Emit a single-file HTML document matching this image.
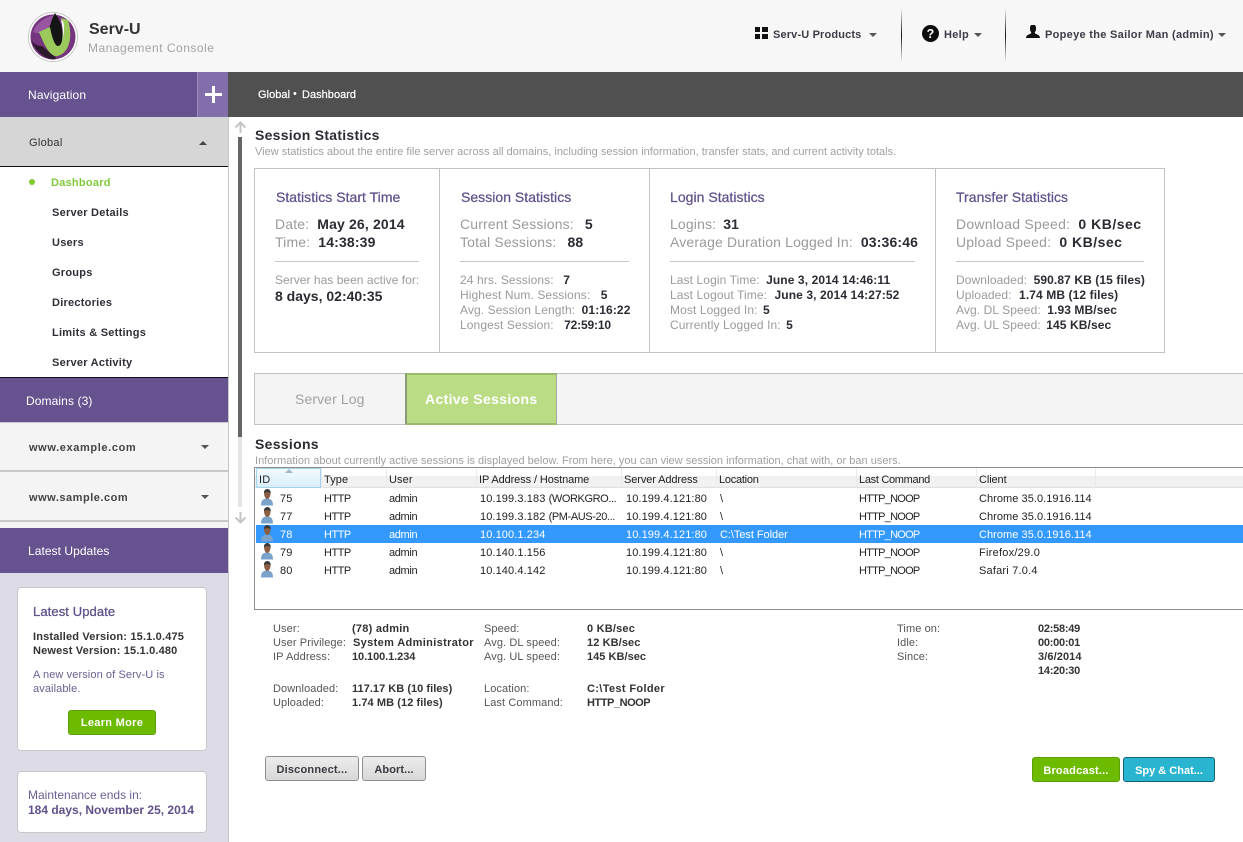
<!DOCTYPE html>
<html><head><meta charset="utf-8"><title>Serv-U Management Console</title>
<style>
html,body{margin:0;padding:0;background:#fff}
#p{position:relative;width:1243px;height:842px;overflow:hidden;font-family:"Liberation Sans",Arial,sans-serif;background:#fff;color:#2b2b33}
#p div,#p span.a,#p svg{position:absolute}
.t{position:absolute;white-space:nowrap;line-height:16px}
.box{box-sizing:border-box}
b{font-weight:bold}
.h{color:#61508a;font-size:14px;letter-spacing:.03px;-webkit-text-stroke:.25px #61508a}
.big{font-size:14px;color:#9a9a9a;letter-spacing:.15px}
.big b{color:#2b2b33;margin-left:4px}
.sm{font-size:12px;color:#9a9a9a;letter-spacing:.1px}
.sm b{color:#2b2b33;margin-left:3px}
.nav{font-size:11px;font-weight:bold;color:#2f2f38;letter-spacing:.25px}
.tb{font-size:11px;letter-spacing:.1px;color:#222}
.th{font-size:11px;letter-spacing:-.1px;color:#222}
.hn{letter-spacing:-.75px}
.ht{letter-spacing:-.5px}
.ad{letter-spacing:-.35px}
.cl{letter-spacing:.05px}
.hs{letter-spacing:-.4px}
.dt{font-size:11px;color:#555;letter-spacing:.1px}
.dv{font-size:11px;font-weight:bold;color:#333;letter-spacing:.35px}
.n{letter-spacing:.03px}
.btn{box-sizing:border-box;border-radius:3px;text-align:center;font-size:11px;font-weight:bold;letter-spacing:.2px}
</style></head><body><div id="p">

<!-- header -->
<div style="left:0;top:0;width:1243px;height:72px;background:#f7f7f7"></div>
<svg style="left:28px;top:12px" width="51" height="51" viewBox="0 0 51 51">
<circle cx="25" cy="25" r="24.5" fill="#fff" stroke="#c8c8c8"/>
<circle cx="25" cy="25" r="22.5" fill="#76357f"/>
<path d="M3 28C8 40 16 46 25 47.500 34 47.500 20 40 14 34 9 34 6 32 3 28Z" fill="#2a1a2c"/>
<path d="M8 14C14 7 22 3 30 3L20 16 12 22 5 20Z" fill="#97569f"/>
<path d="M27 1C21 12 19 24 21 36L32 38C37 28 36 14 27 1Z" fill="#151515"/>
<path d="M11 20L22 15C24 26 27 34 30 34 35 34 36 20 33 6L40 8C45 24 42 40 30 44 22 46 16 32 11 20Z" fill="#9cc95b"/>
<path d="M33 8C36 20 35 28 33 33 36 24 37 16 35 9Z" fill="#fff"/>
</svg>
<span class="t" style="left:89px;top:21px;font-size:16px;font-weight:bold;color:#333;line-height:18px">Serv-U</span>
<span class="t" style="left:88px;top:40px;font-size:12px;color:#a3a3a3;letter-spacing:.5px">Management Console</span>

<svg style="left:755px;top:27px" width="13" height="12"><rect width="5" height="5" fill="#111"/><rect x="7" width="6" height="5" fill="#111"/><rect y="7" width="5" height="5" fill="#111"/><rect x="7" y="7" width="6" height="5" fill="#111"/></svg>
<span class="t" style="left:773px;top:27px;font-size:11px;font-weight:bold;color:#3c3c48;letter-spacing:.15px">Serv-U Products</span>
<svg style="left:869px;top:33px" width="9" height="5"><path d="M0 0H8L4 4Z" fill="#555"/></svg>
<div style="left:901px;top:8px;width:1px;height:54px;background:linear-gradient(#f7f7f7,#111 50%,#f7f7f7)"></div>
<svg style="left:922px;top:25px" width="17" height="17"><circle cx="8.5" cy="8.5" r="8.5" fill="#0c0c0c"/><text x="8.5" y="13" font-size="12.5" font-weight="bold" fill="#fff" text-anchor="middle" font-family="Liberation Sans">?</text></svg>
<span class="t" style="left:944px;top:27px;font-size:11px;font-weight:bold;color:#3c3c48;letter-spacing:.3px">Help</span>
<svg style="left:974px;top:33px" width="9" height="5"><path d="M0 0H8L4 4Z" fill="#555"/></svg>
<div style="left:1005px;top:8px;width:1px;height:54px;background:linear-gradient(#f7f7f7,#111 50%,#f7f7f7)"></div>
<svg style="left:1026px;top:25px" width="14" height="13"><path d="M5 0H9L10 2V5L8.6 8C10 9.500 14 9.500 14 13H0C0 9.500 4 9.500 5.400 8L4 5V2Z" fill="#111"/></svg>
<span class="t" style="left:1045px;top:27px;font-size:11px;font-weight:bold;color:#3c3c48;letter-spacing:.3px">Popeye the Sailor Man (admin)</span>
<svg style="left:1218px;top:33px" width="9" height="5"><path d="M0 0H8L4 4Z" fill="#555"/></svg>

<!-- top bars -->
<div style="left:0;top:72px;width:197px;height:45px;background:#66528f"></div>
<div style="left:197px;top:72px;width:31px;height:45px;background:#826eaa;border-left:1px solid #9c8dbb;box-sizing:border-box"></div>
<div style="left:205px;top:93px;width:17px;height:3px;background:#fff"></div>
<div style="left:212px;top:86px;width:3px;height:17px;background:#fff"></div>
<span class="t" style="left:28px;top:87px;font-size:12px;color:#fff;letter-spacing:.15px">Navigation</span>
<div style="left:228px;top:72px;width:1015px;height:45px;background:#505050"></div>
<span class="t" style="left:258px;top:87px;font-size:11px;color:#fff;letter-spacing:.05px;-webkit-text-stroke:.2px #fff">Global</span>
<span class="t" style="left:293px;top:86px;font-size:11px;color:#fff">•</span>
<span class="t" style="left:302px;top:87px;font-size:11px;color:#fff;letter-spacing:.03px;-webkit-text-stroke:.2px #fff">Dashboard</span>

<!-- sidebar -->
<div style="left:228px;top:117px;width:1px;height:725px;background:#c6c6c6"></div>
<div style="left:0;top:117px;width:228px;height:50px;background:#d6d6d6;border-bottom:1px solid #111;box-sizing:border-box"></div>
<span class="t" style="left:29px;top:135px;font-size:11px;color:#333;letter-spacing:.3px">Global</span>
<svg style="left:199px;top:140px" width="9" height="6"><path d="M0 5H8L4 1Z" fill="#444"/></svg>
<div style="left:29px;top:179px;width:6px;height:6px;border-radius:50%;background:#7ec82a"></div>
<span class="t nav" style="left:51px;top:175px;color:#80c93a">Dashboard</span>
<span class="t nav" style="left:52px;top:205px">Server Details</span>
<span class="t nav" style="left:52px;top:235px">Users</span>
<span class="t nav" style="left:52px;top:265px">Groups</span>
<span class="t nav" style="left:52px;top:295px">Directories</span>
<span class="t nav" style="left:52px;top:325px">Limits &amp; Settings</span>
<span class="t nav" style="left:52px;top:355px">Server Activity</span>
<div style="left:0;top:377px;width:228px;height:1px;background:#111"></div>
<div style="left:0;top:378px;width:228px;height:44px;background:#66528f"></div>
<span class="t" style="left:26px;top:393px;font-size:12px;color:#fff;letter-spacing:.1px">Domains <b style="font-weight:normal">(3)</b></span>
<div style="left:0;top:422px;width:228px;height:50px;background:#f4f4f4;border-bottom:2px solid #c8c8c8;box-sizing:border-box;border-top:1px solid #c8c8c8"></div>
<div style="left:0;top:472px;width:228px;height:50px;background:#f4f4f4;border-bottom:2px solid #c8c8c8;box-sizing:border-box"></div>
<span class="t" style="left:29px;top:440px;font-size:11px;font-weight:bold;color:#444;letter-spacing:.62px">www.example.com</span>
<span class="t" style="left:29px;top:490px;font-size:11px;font-weight:bold;color:#444;letter-spacing:.52px">www.sample.com</span>
<svg style="left:201px;top:445px" width="9" height="5"><path d="M0 0H8L4 4Z" fill="#555"/></svg>
<svg style="left:201px;top:495px" width="9" height="5"><path d="M0 0H8L4 4Z" fill="#555"/></svg>
<div style="left:0;top:522px;width:228px;height:6px;background:#f4f4f4"></div>
<div style="left:0;top:528px;width:228px;height:45px;background:#66528f"></div>
<span class="t" style="left:28px;top:543px;font-size:12px;color:#fff;letter-spacing:.05px">Latest Updates</span>
<div style="left:0;top:573px;width:228px;height:269px;background:#dddbe5"></div>

<div class="box" style="left:17px;top:587px;width:190px;height:164px;background:#fff;border:1px solid #c9c9c9;border-radius:4px"></div>
<span class="t" style="left:33px;top:604px;font-size:13px;-webkit-text-stroke:.3px #61508a;color:#61508a;letter-spacing:.1px">Latest Update</span>
<span class="t" style="left:33px;top:629px;font-size:11px;font-weight:bold;color:#333;letter-spacing:.17px">Installed Version: 15.1.0.475</span>
<span class="t" style="left:33px;top:643px;font-size:11px;font-weight:bold;color:#333;letter-spacing:.17px">Newest Version: 15.1.0.480</span>
<span class="t" style="left:33px;top:667px;font-size:11px;color:#6c5e92;letter-spacing:.1px">A new version of Serv-U is</span>
<span class="t" style="left:33px;top:681px;font-size:11px;color:#6c5e92;letter-spacing:.1px">available.</span>
<div class="btn" style="left:68px;top:710px;width:88px;height:25px;background:#6dbb00;border:1px solid #5c9e05;color:#fff;line-height:25px;letter-spacing:.3px">Learn More</div>
<div class="box" style="left:17px;top:771px;width:190px;height:62px;background:#fff;border:1px solid #c9c9c9;border-radius:4px"></div>
<span class="t" style="left:28px;top:787px;font-size:12px;color:#6c5e92">Maintenance ends in:</span>
<span class="t" style="left:28px;top:802px;font-size:12px;font-weight:bold;color:#61508a">184 days, November 25, 2014</span>

<!-- scrollbar -->
<svg style="left:234px;top:121px" width="13" height="13"><path d="M6.500 12V2M1.500 6.500L6.500 1.500 11.500 6.500" fill="none" stroke="#c4c4c4" stroke-width="2"/></svg>
<div style="left:238px;top:137px;width:4px;height:300px;background:#666"></div>
<div style="left:238px;top:437px;width:4px;height:70px;background:#e4e4e4"></div>
<svg style="left:234px;top:511px" width="13" height="13"><path d="M6.500 1V11M1.500 6.500L6.500 11.500 11.500 6.500" fill="none" stroke="#c4c4c4" stroke-width="2"/></svg>

<!-- session statistics -->
<span class="t" style="left:255px;top:127px;font-size:14px;font-weight:bold;color:#2b2b33;letter-spacing:.27px">Session Statistics</span>
<span class="t" style="left:255px;top:144px;font-size:11px;color:#a0a0a0;letter-spacing:0">View statistics about the entire file server across all domains, including session information, transfer stats, and current activity totals.</span>

<div class="box" style="left:254px;top:168px;width:911px;height:185px;border:1px solid #c2c2c2"></div>
<div style="left:439px;top:168px;width:1px;height:185px;background:#c2c2c2"></div>
<div style="left:649px;top:168px;width:1px;height:185px;background:#c2c2c2"></div>
<div style="left:935px;top:168px;width:1px;height:185px;background:#c2c2c2"></div>

<span class="t h" style="left:276px;top:189px">Statistics Start Time</span>
<span class="t big" style="left:275px;top:216px">Date: <b>May 26, 2014</b></span>
<span class="t big" style="left:275px;top:234px">Time: <b>14:38:39</b></span>
<div style="left:275px;top:261px;width:144px;height:1px;background:#c6c6c6"></div>
<span class="t sm" style="left:275px;top:272px;letter-spacing:.03px">Server has been active for:</span>
<span class="t" style="left:275px;top:288px;font-size:14px;font-weight:bold;color:#2b2b33">8 days, 02:40:35</span>

<span class="t h" style="left:461px;top:189px">Session Statistics</span>
<span class="t big" style="left:460px;top:216px">Current Sessions: <b style="margin-left:7px">5</b></span>
<span class="t big" style="left:460px;top:234px">Total Sessions: <b style="margin-left:7px">88</b></span>
<div style="left:460px;top:261px;width:169px;height:1px;background:#c6c6c6"></div>
<span class="t sm" style="left:460px;top:272px">24 hrs. Sessions: <b style="margin-left:6px">7</b></span>
<span class="t sm" style="left:460px;top:287px">Highest Num. Sessions: <b style="margin-left:7px">5</b></span>
<span class="t sm" style="left:460px;top:302px">Avg. Session Length: <b>01:16:22</b></span>
<span class="t sm" style="left:460px;top:317px">Longest Session: <b style="margin-left:7px;letter-spacing:-.15px">72:59:10</b></span>

<span class="t h" style="left:670px;top:189px">Login Statistics</span>
<span class="t big" style="left:670px;top:216px">Logins: <b style="margin-left:3px">31</b></span>
<span class="t big" style="left:670px;top:234px">Average Duration Logged In: <b>03:36:46</b></span>
<div style="left:670px;top:261px;width:245px;height:1px;background:#c6c6c6"></div>
<span class="t sm" style="left:670px;top:272px">Last Login Time: <b>June 3, 2014 14:46:11</b></span>
<span class="t sm" style="left:670px;top:287px">Last Logout Time: <b style="margin-left:4px">June 3, 2014 14:27:52</b></span>
<span class="t sm" style="left:670px;top:302px">Most Logged In: <b style="margin-left:2px">5</b></span>
<span class="t sm" style="left:670px;top:317px">Currently Logged In: <b style="margin-left:2px">5</b></span>

<span class="t h" style="left:956px;top:189px">Transfer Statistics</span>
<span class="t big" style="left:956px;top:216px;letter-spacing:.25px">Download Speed: <b style="letter-spacing:.5px">0 KB/sec</b></span>
<span class="t big" style="left:956px;top:234px;letter-spacing:.2px">Upload Speed: <b style="letter-spacing:.5px">0 KB/sec</b></span>
<div style="left:956px;top:261px;width:188px;height:1px;background:#c6c6c6"></div>
<span class="t sm" style="left:956px;top:272px">Downloaded: <b>590.87 KB (15 files)</b></span>
<span class="t sm" style="left:956px;top:287px">Uploaded: <b style="margin-left:4px">1.74 MB (12 files)</b></span>
<span class="t sm" style="left:956px;top:302px">Avg. DL Speed: <b>1.93 MB/sec</b></span>
<span class="t sm" style="left:956px;top:317px">Avg. UL Speed: <b style="margin-left:2px">145 KB/sec</b></span>

<!-- tabs -->
<div class="box" style="left:254px;top:373px;width:989px;height:52px;background:#f4f4f4;border:1px solid #c2c2c2;border-right:0"></div>
<div class="box" style="left:405px;top:373px;width:152px;height:52px;background:#b9dc84;border:2px solid #9aba6c;border-left-color:#8a9a78;border-right:1px solid #a8a8a8"></div>
<span class="t" style="left:295px;top:391px;font-size:14px;color:#a2a2a2;letter-spacing:.1px">Server Log</span>
<span class="t" style="left:425px;top:391px;font-size:14px;font-weight:bold;color:#fff;letter-spacing:.34px">Active Sessions</span>

<span class="t" style="left:255px;top:436px;font-size:14px;font-weight:bold;color:#2b2b33;letter-spacing:.3px">Sessions</span>
<span class="t" style="left:255px;top:453px;font-size:11px;color:#a0a0a0;letter-spacing:.01px">Information about currently active sessions is displayed below. From here, you can view session information, chat with, or ban users.</span>

<!-- table -->
<div style="left:254px;top:467px;width:989px;height:1px;background:#8c8c8c"></div>
<div style="left:254px;top:609px;width:989px;height:1px;background:#8c8c8c"></div>
<div style="left:254px;top:467px;width:1px;height:143px;background:#8c8c8c"></div>
<div style="left:255px;top:468px;width:988px;height:20px;background:linear-gradient(#fff 0,#fff 40%,#f0f0f0 41%,#f2f2f2 90%,#ddd 100%)"></div>
<div class="box" style="left:256px;top:468px;width:65px;height:20px;background:linear-gradient(#f2fafe,#d9eefa);border:1px solid #a5d4ee"></div>
<div style="left:321px;top:468px;width:1px;height:20px;background:#eaeaea"></div>
<div style="left:386px;top:468px;width:1px;height:20px;background:#eaeaea"></div>
<div style="left:476px;top:468px;width:1px;height:20px;background:#eaeaea"></div>
<div style="left:621px;top:468px;width:1px;height:20px;background:#eaeaea"></div>
<div style="left:716px;top:468px;width:1px;height:20px;background:#eaeaea"></div>
<div style="left:856px;top:468px;width:1px;height:20px;background:#eaeaea"></div>
<div style="left:976px;top:468px;width:1px;height:20px;background:#eaeaea"></div>
<div style="left:1095px;top:468px;width:1px;height:20px;background:#eaeaea"></div>
<svg style="left:285px;top:469px" width="9" height="4"><path d="M0 4L4 0 8 4Z" fill="#9fb9cb"/></svg>
<span class="t th" style="left:259px;top:472px;letter-spacing:.25px">ID</span>
<span class="t th" style="left:324px;top:472px;letter-spacing:.1px">Type</span>
<span class="t th" style="left:389px;top:472px;letter-spacing:.1px">User</span>
<span class="t th" style="left:479px;top:472px">IP Address / Hostname</span>
<span class="t th" style="left:624px;top:472px">Server Address</span>
<span class="t th" style="left:719px;top:472px;letter-spacing:-.25px">Location</span>
<span class="t th" style="left:859px;top:472px;letter-spacing:-.3px">Last Command</span>
<span class="t th" style="left:979px;top:472px">Client</span>

<div style="left:256px;top:525px;width:987px;height:18px;background:#3399ff"></div>

<svg width="0" height="0" style="left:0;top:0"><defs><g id="u"><path d="M1 16.500C1 11 3.500 9.500 7 9.500S13 11 13 16.500Z" fill="#7aa3cc"/><path d="M4 3.500C4 1.500 5.500 .5 7.500 .5S10.500 2 10.500 4.500C10.500 7.500 9 10 7.200 10S4 7 4 3.500Z" fill="#8a5f43"/><path d="M4 4C3.800 1 6 0 7.500 0 9.500 0 11 2 10.700 4.500 9.500 3 7 2.500 4 4Z" fill="#3b3b3b"/></g></defs></svg>
<svg style="left:260px;top:489px" width="14" height="18"><use href="#u"/></svg>
<svg style="left:260px;top:507px" width="14" height="18"><use href="#u"/></svg>
<svg style="left:260px;top:525px" width="14" height="18"><use href="#u"/></svg>
<svg style="left:260px;top:543px" width="14" height="18"><use href="#u"/></svg>
<svg style="left:260px;top:561px" width="14" height="18"><use href="#u"/></svg>

<span class="t tb" style="left:280px;top:491px">75</span><span class="t tb ht" style="left:324px;top:491px">HTTP</span><span class="t tb ad" style="left:389px;top:491px">admin</span><span class="t tb" style="left:480px;top:491px">10.199.3.183 <span class="hs">(WORKGRO...</span></span><span class="t tb" style="left:626px;top:491px">10.199.4.121:80</span><span class="t tb" style="left:720px;top:491px">\</span><span class="t tb hn" style="left:859px;top:491px">HTTP_NOOP</span><span class="t tb cl" style="left:979px;top:491px">Chrome 35.0.1916.114</span>
<span class="t tb" style="left:280px;top:509px">77</span><span class="t tb ht" style="left:324px;top:509px">HTTP</span><span class="t tb ad" style="left:389px;top:509px">admin</span><span class="t tb" style="left:480px;top:509px">10.199.3.182 <span class="hs">(PM-AUS-20...</span></span><span class="t tb" style="left:626px;top:509px">10.199.4.121:80</span><span class="t tb" style="left:720px;top:509px">\</span><span class="t tb hn" style="left:859px;top:509px">HTTP_NOOP</span><span class="t tb cl" style="left:979px;top:509px">Chrome 35.0.1916.114</span>
<span class="t tb" style="left:280px;top:527px;color:#fff">78</span><span class="t tb ht" style="left:324px;top:527px;color:#fff">HTTP</span><span class="t tb ad" style="left:389px;top:527px;color:#fff">admin</span><span class="t tb" style="left:480px;top:527px;color:#fff">10.100.1.234</span><span class="t tb" style="left:626px;top:527px;color:#fff">10.199.4.121:80</span><span class="t tb" style="left:720px;top:527px;color:#fff;letter-spacing:-.05px">C:\Test Folder</span><span class="t tb hn" style="left:859px;top:527px;color:#fff">HTTP_NOOP</span><span class="t tb cl" style="left:979px;top:527px;color:#fff">Chrome 35.0.1916.114</span>
<span class="t tb" style="left:280px;top:545px">79</span><span class="t tb ht" style="left:324px;top:545px">HTTP</span><span class="t tb ad" style="left:389px;top:545px">admin</span><span class="t tb" style="left:480px;top:545px">10.140.1.156</span><span class="t tb" style="left:626px;top:545px">10.199.4.121:80</span><span class="t tb" style="left:720px;top:545px">\</span><span class="t tb hn" style="left:859px;top:545px">HTTP_NOOP</span><span class="t tb" style="left:979px;top:545px;letter-spacing:.25px">Firefox/29.0</span>
<span class="t tb" style="left:280px;top:563px">80</span><span class="t tb ht" style="left:324px;top:563px">HTTP</span><span class="t tb ad" style="left:389px;top:563px">admin</span><span class="t tb" style="left:480px;top:563px">10.140.4.142</span><span class="t tb" style="left:626px;top:563px">10.199.4.121:80</span><span class="t tb" style="left:720px;top:563px">\</span><span class="t tb hn" style="left:859px;top:563px">HTTP_NOOP</span><span class="t tb" style="left:979px;top:563px;letter-spacing:.2px">Safari 7.0.4</span>

<!-- details -->
<span class="t dt" style="left:273px;top:621px">User:</span><span class="t dv" style="left:352px;top:621px;letter-spacing:.25px">(78) admin</span>
<span class="t dt" style="left:273px;top:635px">User Privilege:</span><span class="t dv" style="left:353px;top:635px">System Administrator</span>
<span class="t dt" style="left:273px;top:649px">IP Address:</span><span class="t dv n" style="left:352px;top:649px;letter-spacing:-.08px">10.100.1.234</span>
<span class="t dt" style="left:273px;top:681px">Downloaded:</span><span class="t dv n" style="left:352px;top:681px">117.17 KB (10 files)</span>
<span class="t dt" style="left:273px;top:695px">Uploaded:</span><span class="t dv n" style="left:352px;top:695px;letter-spacing:.08px">1.74 MB (12 files)</span>
<span class="t dt" style="left:484px;top:621px">Speed:</span><span class="t dv" style="left:587px;top:621px;letter-spacing:.2px">0 KB/sec</span>
<span class="t dt" style="left:484px;top:635px">Avg. DL speed:</span><span class="t dv" style="left:587px;top:635px;letter-spacing:.1px">12 KB/sec</span>
<span class="t dt" style="left:484px;top:649px">Avg. UL speed:</span><span class="t dv n" style="left:587px;top:649px">145 KB/sec</span>
<span class="t dt" style="left:484px;top:681px">Location:</span><span class="t dv" style="left:587px;top:681px">C:\Test Folder</span>
<span class="t dt" style="left:484px;top:695px">Last Command:</span><span class="t dv" style="left:587px;top:695px;letter-spacing:-.45px">HTTP_NOOP</span>
<span class="t dt" style="left:897px;top:621px">Time on:</span><span class="t dv" style="left:1038px;top:621px;letter-spacing:-.25px">02:58:49</span>
<span class="t dt" style="left:897px;top:635px">Idle:</span><span class="t dv" style="left:1038px;top:635px;letter-spacing:-.25px">00:00:01</span>
<span class="t dt" style="left:897px;top:649px">Since:</span><span class="t dv" style="left:1038px;top:649px;letter-spacing:.1px">3/6/2014</span>
<span class="t dv" style="left:1038px;top:663px;letter-spacing:-.25px">14:20:30</span>

<!-- buttons -->
<div class="btn" style="left:265px;top:756px;width:94px;height:25px;background:linear-gradient(#ececec,#d8d8d8);border:1px solid #8e8e8e;color:#3a3a42;line-height:27px">Disconnect...</div>
<div class="btn" style="left:362px;top:756px;width:64px;height:25px;background:linear-gradient(#ececec,#d8d8d8);border:1px solid #8e8e8e;color:#3a3a42;line-height:27px;letter-spacing:.1px">Abort...</div>
<div class="btn" style="left:1032px;top:757px;width:88px;height:25px;background:#6dbb00;border:1px solid #5c9e05;color:#fff;line-height:27px">Broadcast...</div>
<div class="btn" style="left:1123px;top:757px;width:92px;height:25px;background:#29b5d0;border:1px solid #14607a;color:#fff;line-height:27px;letter-spacing:0">Spy &amp; Chat...</div>

</div></body></html>
